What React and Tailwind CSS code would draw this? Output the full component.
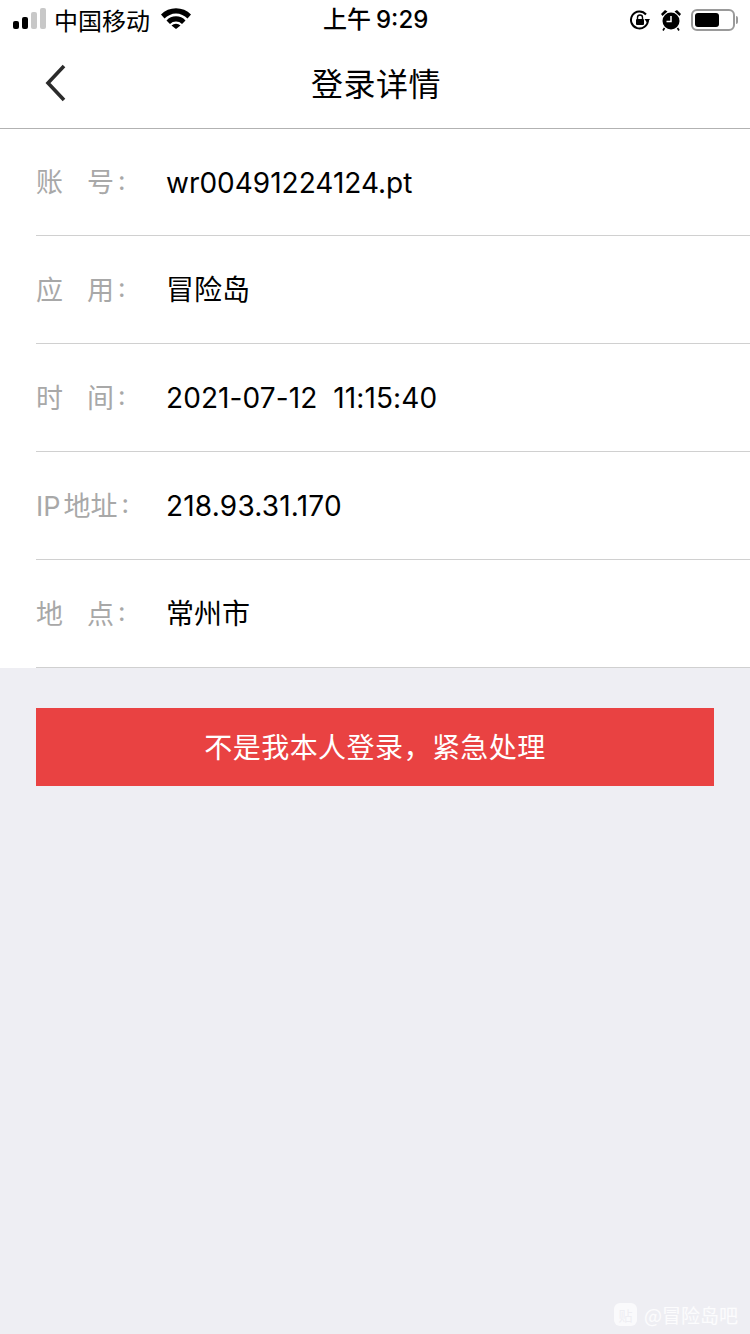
const cjk = { fontFamily: '"Noto Sans CJK SC", "Liberation Sans", sans-serif' };
const mixed = { fontFamily: 'Inter, "Noto Sans CJK SC", sans-serif' };

function StatusBar() {
  return (
    <div className="h-10 flex items-center justify-between bg-white text-black text-[24px] relative" style={cjk}>
      <div className="flex items-center pl-[13px]">
        <svg width="34" height="22" viewBox="0 0 34 22" className="-mt-0.5">
          <rect x="0" y="13" width="6" height="8" rx="2" fill="#000" />
          <rect x="9" y="9" width="6" height="12" rx="2" fill="#000" />
          <rect x="18" y="4" width="6" height="17" rx="2" fill="#c8c8c8" />
          <rect x="27" y="0" width="6" height="21" rx="2" fill="#c8c8c8" />
        </svg>
        <span className="ml-2 -mr-px leading-none -translate-x-px">中国移动</span>
        <svg width="30" height="22" viewBox="0 0 30 22" className="ml-[11px] -mt-1">
          <path d="M0 7.5 A21 21 0 0 1 30 7.5 L26.5 11.5 A16 16 0 0 0 3.5 11.5 Z" fill="#000" />
          <path d="M5.5 13.5 A13 13 0 0 1 24.5 13.5 L21 17 A8.5 8.5 0 0 0 9 17 Z" fill="#000" />
          <path d="M10.5 18.5 A6.5 6.5 0 0 1 19.5 18.5 L15 22 Z" fill="#000" />
        </svg>
      </div>
      <span className="absolute left-[323px] top-[2px] leading-[36px] font-medium whitespace-pre" style={mixed}>
        上午<span className="ml-[5px] text-[24px]">9:29</span>
      </span>
      <div className="flex items-center pr-[12px]">
        <svg width="22" height="22" viewBox="0 0 22 22" className="translate-x-px">
          <path d="M17 5.5 A8.5 8.5 0 1 0 19 11" fill="none" stroke="#000" strokeWidth="2" />
          <path d="M15.5 10 L21 10 L18.2 14 Z" fill="#000" />
          <rect x="7" y="10" width="8" height="6" rx="1" fill="#000" />
          <path d="M8.5 10 V8.5 A2.5 2.5 0 0 1 13.5 8.5 V10" fill="none" stroke="#000" strokeWidth="1.4" />
        </svg>
        <svg width="22" height="24" viewBox="0 0 22 24" className="ml-[10px]">
          <circle cx="11" cy="13" r="8.5" fill="#000" />
          <path d="M11 8 V13.5 H6.5" fill="none" stroke="#fff" strokeWidth="1.5" />
          <path d="M1 6 L5 2 L7.5 3.5 L2.5 8 Z M21 6 L17 2 L14.5 3.5 L19.5 8 Z" fill="#000" />
          <path d="M4.5 20 L3 22.5 M17.5 20 L19 22.5" stroke="#000" strokeWidth="1.6" />
        </svg>
        <div className="flex items-center ml-[9px]">
          <div className="w-[44px] h-[22px] rounded-[6px] border-2 border-[#9a9a9a] p-[2px]">
            <div className="w-[24px] h-full bg-black rounded-[3px]" />
          </div>
          <div className="w-[2px] h-[8px] ml-[1px] bg-[#9a9a9a] rounded-r-sm" />
        </div>
      </div>
    </div>
  );
}

function NavBar() {
  return (
    <div className="h-[89px] bg-white border-b border-[#b2b2b2] flex items-center justify-center relative">
      <svg width="24" height="40" viewBox="0 0 24 40" className="absolute left-[44px] top-[23px]">
        <path d="M20 3 L4 20 L20 37" fill="none" stroke="#2b2b2b" strokeWidth="3.6" />
      </svg>
      <span className="text-[32px] text-black leading-none tracking-[0.5px] -mt-[4px] ml-[2px]" style={cjk}>登录详情</span>
    </div>
  );
}

function Row({ label, children, first }) {
  return (
    <div className={first ? 'h-[107px] pl-9' : 'h-[108px] pl-9'}>
      <div className="h-full flex items-center border-b border-[#d0d0d0]">
        <div className="w-[130px] shrink-0 mt-[1px] text-[27px] text-[#a8a8a8] leading-none" style={mixed}>
          {label}
        </div>
        <div className="text-[28px] text-black leading-none mt-[1px]" style={mixed}>{children}</div>
      </div>
    </div>
  );
}

function Spaced({ a, b }) {
  return (
    <div className="flex items-center">
      <span>{a}</span>
      <span className="ml-[24px]">{b}</span>
      <span className="ml-[4px] text-[26px] -mt-[4px]">:</span>
    </div>
  );
}

export default function App() {
  return (
    <div className="w-[750px] h-[1334px] bg-[#eeeef3] relative overflow-hidden">
      <StatusBar />
      <NavBar />
      <div className="bg-white h-[539px]">
        <Row first label={<Spaced a="账" b="号" />}>wr00491224124.pt</Row>
        <Row label={<Spaced a="应" b="用" />}>冒险岛</Row>
        <Row label={<Spaced a="时" b="间" />}><span className="whitespace-pre tracking-[0.1px]">2021-07-12  11:15:40</span></Row>
        <Row label={<div className="flex items-center"><span>IP</span><span className="ml-[3px]">地址</span><span className="ml-[4px] text-[26px] -mt-[4px]">:</span></div>}><span className="tracking-[0.2px]">218.93.31.170</span></Row>
        <Row label={<Spaced a="地" b="点" />}>常州市</Row>
      </div>
      <div className="mx-9 mt-[40px] h-[78px] bg-[#e94242] flex items-center justify-center text-white text-[28px] tracking-[0.45px] pb-[2px]" style={cjk}>
        不是我本人登录，紧急处理
      </div>
      <div className="absolute right-[12px] bottom-[8px] flex items-center text-white/80 text-[19px] leading-none" style={cjk}>
        <div className="w-[23px] h-[23px] rounded-[6px] bg-white/70 flex items-center justify-center text-[#eeeef3] text-[14px]">贴</div>
        <span className="ml-[7px]">@冒险岛吧</span>
      </div>
    </div>
  );
}
